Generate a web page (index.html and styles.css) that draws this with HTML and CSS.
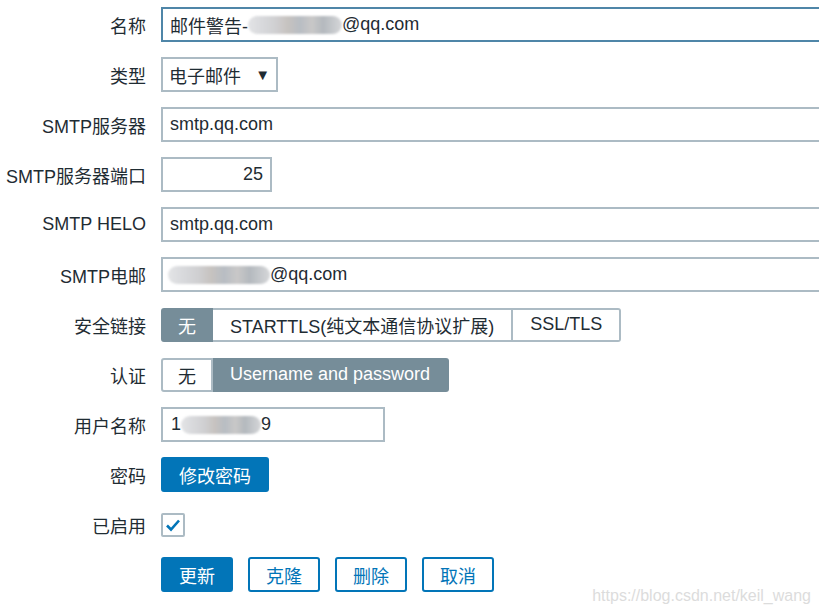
FILE: index.html
```html
<!DOCTYPE html>
<html lang="zh">
    <head>
        <meta charset="UTF-8">
        <title>报警媒介类型</title>
        <link rel="stylesheet" href="styles.css">
    </head>
    <body>
        <form class="form">
            <label class="label" for="name">名称</label>
            <div class="field field-clip">
                <div class="input input-focus input-wide">邮件警告-<span class="blur blur-name"></span>@qq.com</div>
            </div>

            <label class="label" for="type">类型</label>
            <div class="field">
                <div class="select">电子邮件<span class="arrow">&#9660;</span></div>
            </div>

            <label class="label">SMTP服务器</label>
            <div class="field field-clip">
                <div class="input input-wide">smtp.qq.com</div>
            </div>

            <label class="label">SMTP服务器端口</label>
            <div class="field">
                <div class="input input-port">25</div>
            </div>

            <label class="label">SMTP HELO</label>
            <div class="field field-clip">
                <div class="input input-wide">smtp.qq.com</div>
            </div>

            <label class="label">SMTP电邮</label>
            <div class="field field-clip">
                <div class="input input-wide input-tight"><span class="blur blur-mail"></span>@qq.com</div>
            </div>

            <label class="label">安全链接</label>
            <div class="field">
                <div class="segments">
                    <span class="segment segment-short segment-on">无</span>
                    <span class="segment">STARTTLS(纯文本通信协议扩展)</span>
                    <span class="segment">SSL/TLS</span>
                </div>
            </div>

            <label class="label">认证</label>
            <div class="field">
                <div class="segments">
                    <span class="segment segment-short">无</span>
                    <span class="segment segment-on">Username and password</span>
                </div>
            </div>

            <label class="label">用户名称</label>
            <div class="field">
                <div class="input input-user">1<span class="blur blur-user"></span>9</div>
            </div>

            <label class="label">密码</label>
            <div class="field">
                <span class="button button-primary">修改密码</span>
            </div>

            <label class="label">已启用</label>
            <div class="field">
                <span class="checkbox">
                    <svg width="16" height="14" viewBox="0 0 16 14">
                        <path d="M2 7.5 L6 11.5 L14 2.5" fill="none" stroke="#0275b8" stroke-width="2.6"/>
                    </svg>
                </span>
            </div>

            <span class="label"></span>
            <div class="field buttons">
                <span class="button button-primary">更新</span>
                <span class="button button-outline">克隆</span>
                <span class="button button-outline">删除</span>
                <span class="button button-outline">取消</span>
            </div>
        </form>
        <div class="watermark">https://blog.csdn.net/keil_wang</div>
    </body>
</html>
```

FILE: styles.css
```css
html, body {
    margin: 0;
    height: 100%;
    overflow: hidden;
}
body {
    background: #fff;
    color: #1f2c33;
    font-family: "Liberation Sans", "Noto Sans CJK SC", sans-serif;
    font-size: 18px;
    position: relative;
}
.form {
    display: grid;
    grid-template-columns: 146px minmax(0, 1fr);
    grid-auto-rows: 35px;
    column-gap: 15px;
    row-gap: 15px;
    padding-top: 7px;
}
.label {
    display: flex;
    align-items: center;
    justify-content: flex-end;
    white-space: nowrap;
}
.field {
    display: flex;
    align-items: center;
    min-width: 0;
}
.field-clip {
    overflow: hidden;
}
.input {
    box-sizing: border-box;
    height: 35px;
    border: 2px solid #acbbc4;
    padding: 0 7px;
    display: flex;
    align-items: center;
    white-space: nowrap;
    background: #fff;
}
.input-focus {
    border-color: #4f86a8;
}
.input-wide {
    width: 720px;
    flex: none;
}
.input-tight {
    padding-left: 5px;
}
.input-port {
    width: 111px;
    justify-content: flex-end;
}
.input-user {
    width: 224px;
    padding-left: 8px;
}
.blur {
    display: inline-block;
    height: 18px;
    border-radius: 9px;
    filter: blur(1px);
    background: linear-gradient(90deg, #e3e4e6 0%, #d8d9dc 15%, #cfcfd1 30%, #c7c3c0 42%, #b8bdc3 55%, #c9c8c8 68%, #b4b9be 80%, #d6d7d9 100%);
}
.blur-name {
    width: 94px;
}
.blur-mail {
    width: 102px;
}
.blur-user {
    width: 80px;
}
.select {
    box-sizing: border-box;
    height: 35px;
    width: 117px;
    border: 2px solid #acbbc4;
    padding: 0 6px;
    display: flex;
    align-items: center;
    justify-content: space-between;
}
.arrow {
    font-size: 15px;
}
.segments {
    display: flex;
    height: 34px;
}
.segment {
    box-sizing: border-box;
    border: 2px solid #acbbc4;
    padding: 0 17px;
    display: flex;
    align-items: center;
    justify-content: center;
    background: #fff;
    white-space: nowrap;
}
.segment-short {
    width: 52px;
    padding: 0;
}
.segment + .segment {
    border-left-width: 0;
}
.segment:first-child {
    border-radius: 3px 0 0 3px;
}
.segment:last-child {
    border-radius: 0 3px 3px 0;
}
.segment-on {
    background: #768d99;
    border-color: #768d99;
    color: #fff;
}
.button {
    box-sizing: border-box;
    height: 35px;
    padding: 0 16px;
    border: 2px solid #0275b8;
    border-radius: 3px;
    display: flex;
    align-items: center;
}
.button-primary {
    background: #0275b8;
    color: #fff;
}
.button-outline {
    background: #fff;
    color: #0275b8;
}
.buttons {
    gap: 15px;
}
.checkbox {
    box-sizing: border-box;
    width: 24px;
    height: 24px;
    border: 2px solid #acbbc4;
    border-radius: 2px;
    display: flex;
    align-items: center;
    justify-content: center;
}
.watermark {
    position: absolute;
    right: 8px;
    bottom: 8px;
    color: #dcdcdc;
    font-size: 16px;
}
```
